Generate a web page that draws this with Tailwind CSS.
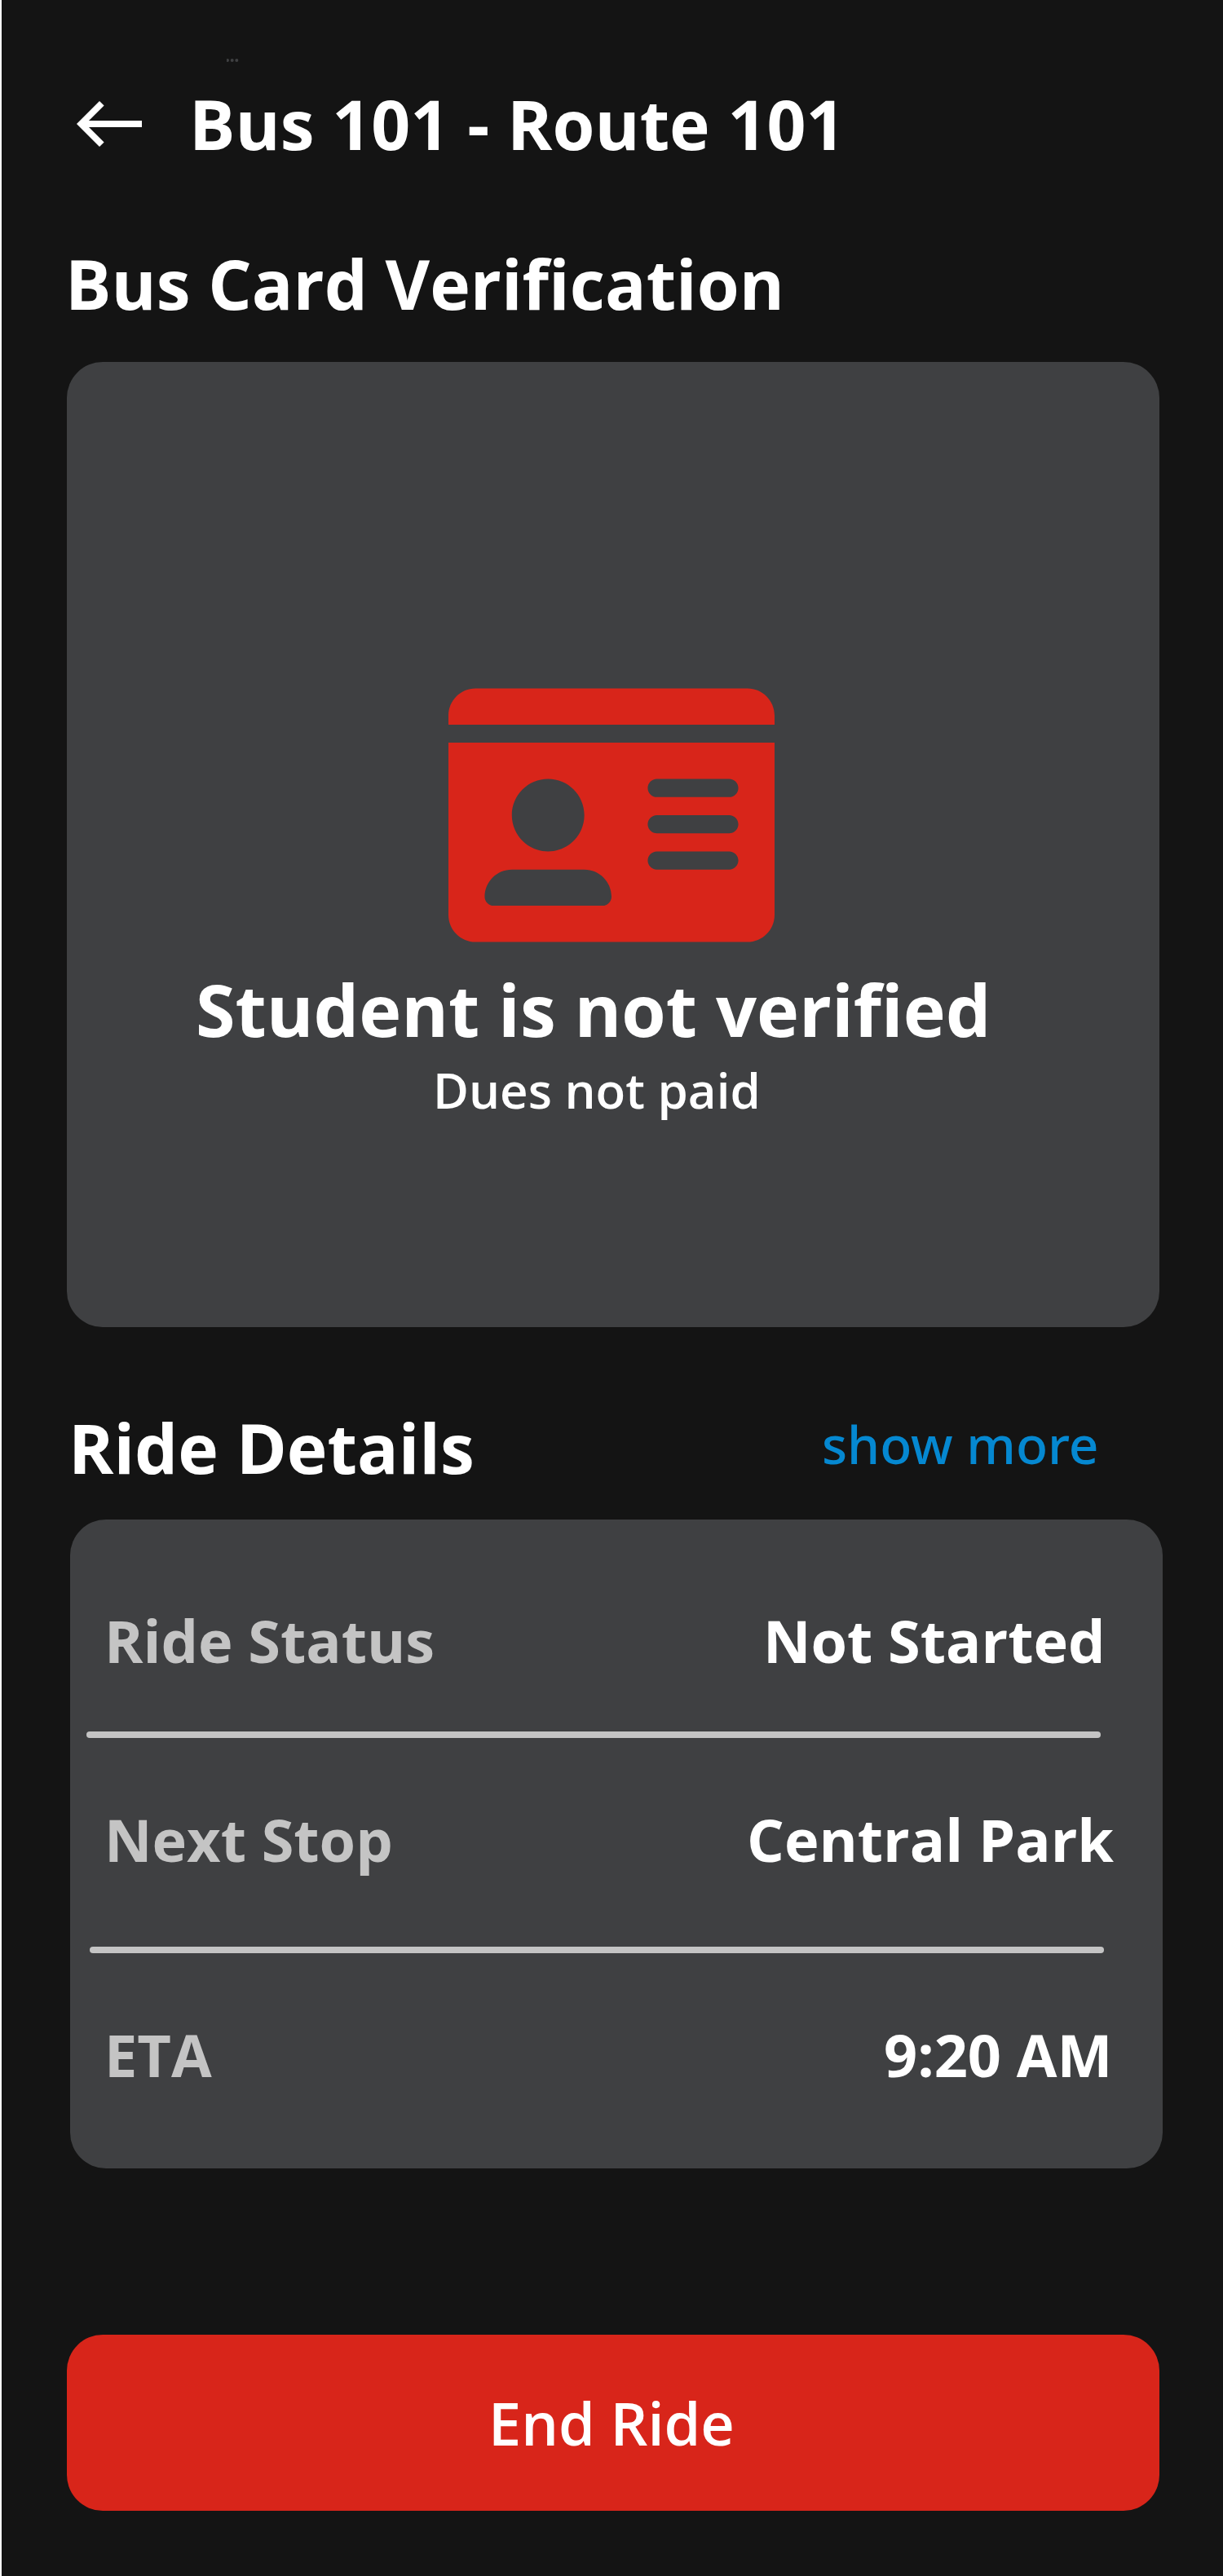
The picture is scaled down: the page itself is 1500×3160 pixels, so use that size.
<!DOCTYPE html>
<html lang="en">
<head>
<meta charset="utf-8">
<title>Bus 101 - Route 101</title>
<script src="https://cdn.jsdelivr.net/npm/@tailwindcss/browser@4"></script>
</head>
<body class="bg-[#141414]">
<main class="flex h-[3160px] w-[1500px] flex-col overflow-hidden border-l-2 border-white bg-[#141414] pt-[72px] font-['Open_Sans',sans-serif] text-white">
  <svg class="ml-[276px] h-1 w-4 shrink-0" viewBox="0 0 16 4" fill="#3f4042" aria-hidden="true">
    <circle cx="1" cy="2" r="2"/><circle cx="6.7" cy="2" r="2"/><circle cx="12.3" cy="2" r="2"/>
  </svg>

  <header class="mt-[18px] flex items-start gap-[58px] pl-[92px]">
    <svg class="mt-[30px] h-14 w-20 shrink-0" viewBox="0 0 80 56" fill="currentColor" role="img" aria-label="Back">
      <path d="M0 28L28 0l5.6 5.6L15 24h65v8H15l18.6 18.4L28 56z"/>
    </svg>
    <h1 class="text-[84px] leading-[115px] font-bold whitespace-nowrap">Bus 101 - Route 101</h1>
  </header>

  <h2 class="mt-[81px] pl-[78px] text-[84px] leading-[115px] font-bold whitespace-nowrap">Bus Card Verification</h2>

  <section class="mt-[39px] ml-20 flex h-[1184px] w-[1340px] shrink-0 flex-col items-start rounded-[44px] bg-[#3f4042] pt-[378px]">
    <svg class="ml-[468px] h-[356px] w-[400px] shrink-0" viewBox="0 0 576 512" fill="#d8251a" aria-hidden="true">
      <path d="M528 32H48C21.5 32 0 53.5 0 80v16h576V80c0-26.5-21.5-48-48-48zM0 432c0 26.5 21.5 48 48 48h480c26.5 0 48-21.5 48-48V128H0v304zm368-240h128c8.8 0 16 7.2 16 16s-7.2 16-16 16H368c-8.8 0-16-7.2-16-16s7.2-16 16-16zm0 64h128c8.8 0 16 7.2 16 16s-7.2 16-16 16H368c-8.8 0-16-7.2-16-16s7.2-16 16-16zm0 64h128c8.8 0 16 7.2 16 16s-7.2 16-16 16H368c-8.8 0-16-7.2-16-16s7.2-16 16-16zM176 192c35.3 0 64 28.7 64 64s-28.7 64-64 64-64-28.7-64-64 28.7-64 64-64zM64 400c0-26.5 21.5-48 48-48h128c26.5 0 48 21.5 48 48 0 8.8-7.2 16-16 16H80c-8.8 0-16-7.2-16-16z"/>
    </svg>
    <p class="mt-0.5 ml-[158px] text-[88px] leading-[116px] font-bold whitespace-nowrap">Student is not verified</p>
    <p class="ml-[449px] text-[60px] leading-[82px] font-semibold whitespace-nowrap">Dues not paid</p>
  </section>

  <div class="mt-[90px] flex items-start justify-between pr-[152.4px] pl-[82px]">
    <h2 class="text-[84px] leading-[115px] font-bold whitespace-nowrap">Ride Details</h2>
    <a class="mt-[10px] font-['Noto_Sans',sans-serif] text-[64px] leading-[87px] font-medium whitespace-nowrap text-[#0588d1]">show more</a>
  </div>

  <section class="mt-[31px] ml-[84px] flex h-[796px] w-[1340px] shrink-0 flex-col rounded-[44px] bg-[#3f4042] pt-[99px] text-[72px] leading-[98px] font-bold whitespace-nowrap">
    <div class="flex justify-between pr-[70.5px] pl-[42px]">
      <span class="text-[#c4c4c4]">Ride Status</span><span>Not Started</span>
    </div>
    <div class="mt-[63px] ml-5 h-2 w-[1244px] shrink-0 rounded-full bg-[#c4c4c4]"></div>
    <div class="mt-[75px] flex justify-between pr-[60px] pl-[42px]">
      <span class="text-[#c4c4c4]">Next Stop</span><span>Central Park</span>
    </div>
    <div class="mt-[83px] ml-6 h-2 w-[1244px] shrink-0 rounded-full bg-[#c4c4c4]"></div>
    <div class="mt-[75px] flex justify-between pr-[61.7px] pl-[42px]">
      <span class="text-[#c4c4c4]">ETA</span><span>9:20 AM</span>
    </div>
  </section>

  <button class="mt-[204px] ml-20 flex h-[216px] w-[1340px] shrink-0 items-start rounded-[44px] bg-[#d8251a] pt-[59px] pl-[517px] text-[72px] leading-[98px] font-semibold whitespace-nowrap">End Ride</button>
</main>
</body>
</html>
